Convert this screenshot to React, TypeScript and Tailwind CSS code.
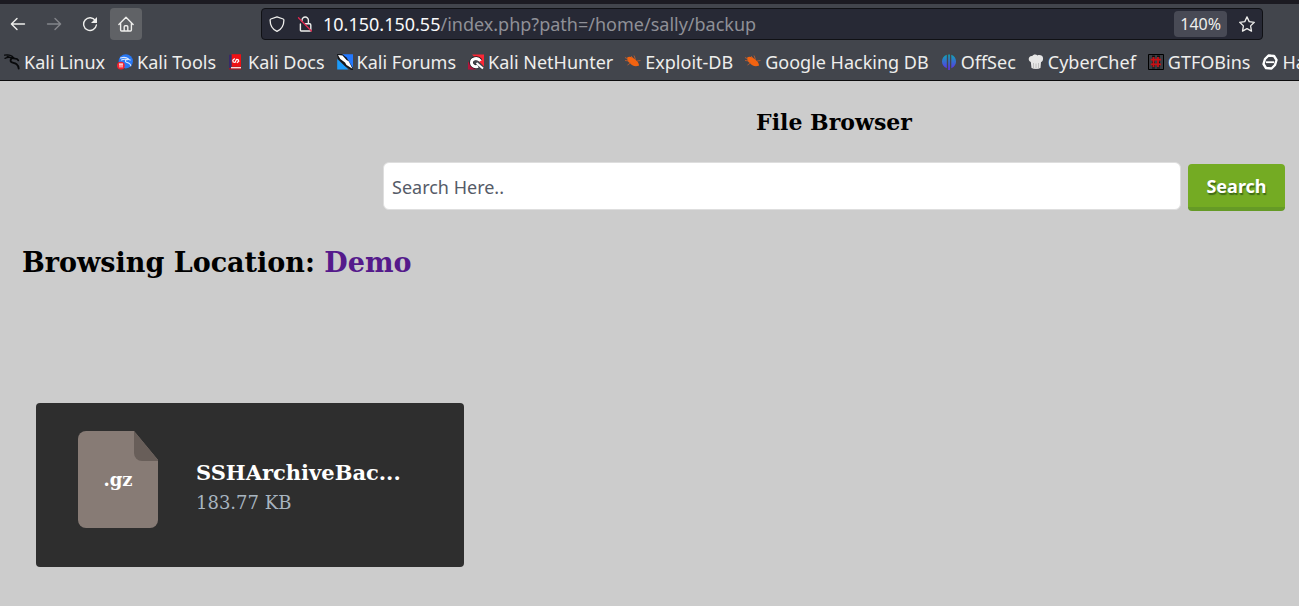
import type { ReactNode } from "react";

const stroke = {
  fill: "none",
  stroke: "currentColor",
  strokeLinecap: "round" as const,
  strokeLinejoin: "round" as const,
};

function Icon({ children, className = "size-4 shrink-0" }: { children: ReactNode; className?: string }) {
  return (
    <svg viewBox="0 0 16 16" className={className} aria-hidden="true">
      {children}
    </svg>
  );
}

const BackIcon = () => (
  <Icon>
    <path {...stroke} strokeWidth="1.4" d="M14.5 8H1.6M7 2.4 1.4 8 7 13.6" />
  </Icon>
);
const ForwardIcon = () => (
  <Icon>
    <path {...stroke} strokeWidth="1.4" d="M1.5 8h12.9M9 2.4 14.6 8 9 13.6" />
  </Icon>
);
const ReloadIcon = () => (
  <Icon>
    <path {...stroke} strokeWidth="1.4" d="M13.4 4.6A6.4 6.4 0 1 0 14.4 9" />
    <path fill="currentColor" d="M15 1v5.4q0 .6-.6.6H9z" />
  </Icon>
);
const HomeIcon = () => (
  <Icon>
    <path {...stroke} strokeWidth="1.4" d="M.9 8.4 8 1.2l7.1 7.2M2.6 7v7q0 1 1 1h8.8q1 0 1-1V7M6.2 14.8v-4q0-1 1-1h1.6q1 0 1 1v4" />
  </Icon>
);
const ShieldIcon = () => (
  <Icon>
    <path {...stroke} strokeWidth="1.3" d="M8 .8 14.2 3q.7.3.7 1c0 5-2 9.2-6.9 11.4C3.1 13.2 1.1 9 1.1 4q0-.7.7-1z" />
  </Icon>
);
const InsecureIcon = () => (
  <Icon>
    <path {...stroke} strokeWidth="1.4" d="M5 5V4.200a3.200 3.200 0 0 1 6.400 0V7.500M3.400 8v6.300q0 .7.700.7h9q.7 0 .7-.7V9q0-1.200-1.200-1.200H8.500" />
    <path stroke="#e22850" strokeWidth="1.3" strokeLinecap="round" d="m1.5 1.800 12.900 13.200" />
  </Icon>
);
const StarIcon = () => (
  <Icon>
    <path {...stroke} strokeWidth="1.3" d="m8 .9 2.200 4.700 5.100.7-3.700 3.600.9 5.200L8 12.600l-4.500 2.500.9-5.200L.7 6.300l5.100-.7z" />
  </Icon>
);

const KaliLinux = () => (
  <Icon>
    <g fill="none" stroke="#08090b" strokeLinecap="round">
      <path strokeWidth="1.2" d="M.5 1.200C4 .6 7.500 1.300 9.500 3.600M1 4.400c2.500-1.300 5-1.300 8 0M3 2.300l5 1.500" />
      <path strokeWidth="1.8" d="M9.500 4c-3.500.2-4 3.700-.8 4.600 3 .8 5.500 1.500 6 6" />
      <path strokeWidth="1.7" d="M9.500 4.300 13 5l1.300 1.300" />
    </g>
  </Icon>
);
const KaliTools = () => (
  <Icon>
    <circle cx="8.800" cy="7.300" r="7.100" fill="#2878f5" />
    <path fill="none" stroke="#d9e8ff" strokeWidth="1.1" strokeLinecap="round" d="M3.500 4c3-1 6-.8 8 1M4.500 6c2-1 4-1 6-.2M10 5.500c-2.200.3-2 2.500 0 3s3.500 1 3.800 3.200M11 5.300l2.200.8" />
    <circle cx="3.900" cy="11.600" r="3.900" fill="#f22330" />
    <path stroke="#fff" strokeWidth="1" d="M2 10h4M3 10v3.500M5 10v3.500" />
  </Icon>
);
const KaliDocs = () => (
  <Icon>
    <path fill="#ef1014" d="M3.500.200H13v12.600H3.500z" />
    <path fill="#382a68" d="M1 .800h2.500v13H1z" />
    <path fill="#b80d18" d="M1.200 14h12v1.500h-12z" />
    <path fill="#f4dede" d="M3 13h10v1.400H3z" />
    <path fill="none" stroke="#fff" strokeWidth="1.200" strokeLinecap="round" strokeLinejoin="round" d="M6.500 4.800 4.800 6.200 5.200 8l1.800.400L8.400 5.400l1.800.200.600 1.700-1.600 1.200" />
  </Icon>
);
const KaliForums = () => (
  <Icon>
    <path fill="#2378ff" d="M3 .3h13v15.200h-2z" />
    <path fill="#1b9bfa" d="m.2 5 11.300 10.600H.2z" />
    <path fill="#15171b" d="M0 0h5l4.500 3.500L16 14v2h-2L8 12 1 5z" />
    <path fill="#fff" d="m1 1 4.500.6 4 4.400 2.200 1.300 3.800 7.400-6-3.700-1.500-2.500-4.700-3.500z" />
  </Icon>
);
const KaliNetHunter = () => (
  <Icon>
    <path fill="#fa2735" d="M4 .4h12v12z" />
    <path fill="#b4143b" d="M0 7.500 8 15.500H0z" />
    <path fill="none" stroke="#15171b" strokeWidth="4.200" d="M12.500 6.500c-3-4-9-2-9 2 0 3.200 3.700 5.300 6.500 3.600" />
    <path fill="none" stroke="#fff" strokeWidth="3" d="M12.500 7C9.500 2.800 3.500 4.800 3.500 8.500c0 3.200 3.700 5.300 6.500 3.600" />
    <path stroke="#fff" strokeWidth="2" d="m8.500 9 6.500 5.500" />
  </Icon>
);
const ExploitDb = () => (
  <Icon>
    <path fill="#f26310" d="M2.200 3.600C4 1.800 7.800 3 10.300 5.500c2.600 1.900 3.300 3.600 3.800 6.100-3.800 1.300-7.500.2-9.300-2.600-2-1-2.700-3.200-2.600-5.400z" />
    <path fill="none" stroke="#c66130" strokeWidth=".8" d="M0 3.500 3 5M0 6.500l4 .5M2.500 11l3-2M6 2l2 2.300M9 1.500l1.500 4M12 7l3.500-.5" />
  </Icon>
);
const OffSec = () => (
  <Icon>
    <defs>
      <linearGradient id="offsec" x1="0" x2="0" y1="0" y2="1">
        <stop offset="0" stopColor="#10a6b5" />
        <stop offset="1" stopColor="#612bea" />
      </linearGradient>
    </defs>
    <path fill="url(#offsec)" d="M5.800.800v13.500C-1.300 11 .100 2.500 5.800.800zM7.200.400h1.700V16H7.200zM10.300.800v13.500c7-3.300 5.600-11.800 0-13.500z" />
  </Icon>
);
const CyberChef = () => (
  <Icon>
    <path fill="#e6e6e6" d="M2.800 8C-.5 6.800.3 1.600 4.200 2 5 .2 8.300-.1 9.500 1.500 11.500.3 15.700 1.500 15 5c0 1.800-.8 2.800-2 3l-.5 6c-2.500 1.200-6.500 1.200-9 0z" />
    <path fill="none" stroke="#b5b5b5" strokeWidth=".8" d="M5.500 9v5M8 9.500v5M10.500 9v5" />
  </Icon>
);
const GtfoBins = () => (
  <Icon>
    <path fill="#3b3d43" stroke="#000" d="M.5.5h15v15H.5z" />
    <path stroke="#111" strokeWidth="3" strokeDasharray="2 1" d="M5.500 1.500v13M10.500 1.500v13" />
    <path stroke="#c91014" strokeWidth="1.800" d="M5.500 3v10M10 3v10M2.800 5.700H13M2.800 10.300H13" />
  </Icon>
);
const HackTricks = () => (
  <Icon>
    <path fill="none" stroke="#fff" strokeWidth="2.400" strokeLinejoin="round" d="M6.500 1.500 12 2l2.500 4-1.500 5-3.500 3.500-5.500-.5L1.500 10 3 5z" />
    <path fill="none" stroke="#fff" strokeWidth="1.800" d="M4 8.200h8" />
  </Icon>
);

const bookmarks: { label: string; icon: () => ReactNode }[] = [
  { label: "Kali Linux", icon: KaliLinux },
  { label: "Kali Tools", icon: KaliTools },
  { label: "Kali Docs", icon: KaliDocs },
  { label: "Kali Forums", icon: KaliForums },
  { label: "Kali NetHunter", icon: KaliNetHunter },
  { label: "Exploit-DB", icon: ExploitDb },
  { label: "Google Hacking DB", icon: ExploitDb },
  { label: "OffSec", icon: OffSec },
  { label: "CyberChef", icon: CyberChef },
  { label: "GTFOBins", icon: GtfoBins },
  { label: "HackTricks", icon: HackTricks },
];

function NavButton({ label, children, className = "" }: { label: string; children: ReactNode; className?: string }) {
  return (
    <button type="button" aria-label={label} className={`flex size-8 items-center justify-center rounded ${className}`}>
      {children}
    </button>
  );
}

function BrowserChrome() {
  return (
    <header className="border-t-4 border-b border-t-[#1c1b22] border-b-[#0c0c0d] bg-[#42454c] font-['Noto_Sans',sans-serif] text-[#eeeeec]">
      <div className="flex items-center pt-1 pr-9 pl-0.5">
        <nav aria-label="Navigation" className="flex shrink-0 gap-1">
          <NavButton label="Back">
            <BackIcon />
          </NavButton>
          <NavButton label="Forward" className="text-[#83858a]">
            <ForwardIcon />
          </NavButton>
          <NavButton label="Reload">
            <ReloadIcon />
          </NavButton>
          <NavButton label="Home" className="bg-[#606266]">
            <HomeIcon />
          </NavButton>
        </nav>
        <div className="ml-[119px] flex h-8 min-w-0 flex-1 items-center rounded border border-[#101115] bg-[#272935] px-[7px]">
          <ShieldIcon />
          <span className="ml-3 flex">
            <InsecureIcon />
          </span>
          <div className="ml-2.5 min-w-0 flex-1 truncate text-lg leading-7 text-[#8f9097]">
            <span className="text-[#f9f9fa]">10.150.150.55</span>/index.php?path=/home/sally/backup
          </div>
          <button type="button" className="mr-3 h-6.5 rounded-sm bg-[#484a55] px-1.5 text-base leading-6">
            140%
          </button>
          <button type="button" aria-label="Bookmark this page">
            <StarIcon />
          </button>
        </div>
      </div>
      <nav aria-label="Bookmarks" className="flex h-10 gap-3 overflow-hidden pt-1.5 pb-0.5 pl-1">
        {bookmarks.map(({ label, icon: Glyph }) => (
          <a key={label} href="#" className="flex shrink-0 items-center gap-1 text-lg leading-7 whitespace-nowrap">
            <Glyph />
            {label}
          </a>
        ))}
      </nav>
    </header>
  );
}

function FileCard({ ext, name, size }: { ext: string; name: string; size: string }) {
  return (
    <a href="#" className="flex h-41 w-107 max-w-full rounded bg-[#2e2e2e] pt-7 pl-10.5">
      <span className="relative h-[97px] w-20 shrink-0">
        <svg viewBox="0 0 80 97" className="size-full" aria-hidden="true">
          <path fill="#877b75" d="M8 0h48l24 29v60a8 8 0 0 1-8 8H8a8 8 0 0 1-8-8V8a8 8 0 0 1 8-8z" />
          <path fill="#685e59" d="M56 0v22a8 8 0 0 0 8 8h16v-1z" />
        </svg>
        <span className="absolute inset-0 flex items-center justify-center text-lg leading-6 font-bold text-white">{ext}</span>
      </span>
      <span className="mt-7 ml-[38px] flex flex-col">
        <strong className="text-[21px] leading-7 text-white">{name}</strong>
        <span className="text-lg leading-8 text-[#a8b5c0]">{size}</span>
      </span>
    </a>
  );
}

export default function App() {
  return (
    <div className="min-h-screen bg-[#cccccc] font-['DejaVu_Serif',serif] text-black">
      <BrowserChrome />
      <main className="pr-3.5 pb-9 pl-[22px]">
        <form className="ml-[361px] pt-[25px]" onSubmit={(e) => e.preventDefault()}>
          <h1 className="text-center text-[22px] leading-8 font-bold">File Browser</h1>
          <div className="mt-6 flex items-start gap-[7px] font-['Noto_Sans',sans-serif]">
            <input
              type="search"
              aria-label="Search files"
              placeholder="Search Here.."
              className="h-12 min-w-0 flex-1 rounded-md border border-[#dedede] bg-white px-2 pt-0.5 text-lg placeholder:text-[#555b68]"
            />
            <button
              type="submit"
              className="mt-0.5 h-[47px] w-[97px] rounded border-b-4 border-[#659a26] bg-[#74ab23] text-lg leading-7 font-bold text-white [text-shadow:1px_2px_1px_#3f6b16]"
            >
              Search
            </button>
          </div>
        </form>
        <h2 className="mt-8 text-[27px] leading-10 font-bold">
          Browsing Location:{" "}
          <a href="#" className="text-[#551a8b]">
            Demo
          </a>
        </h2>
        <ul className="mt-30 ml-3.5">
          <li>
            <FileCard ext=".gz" name="SSHArchiveBac..." size="183.77 KB" />
          </li>
        </ul>
      </main>
    </div>
  );
}
